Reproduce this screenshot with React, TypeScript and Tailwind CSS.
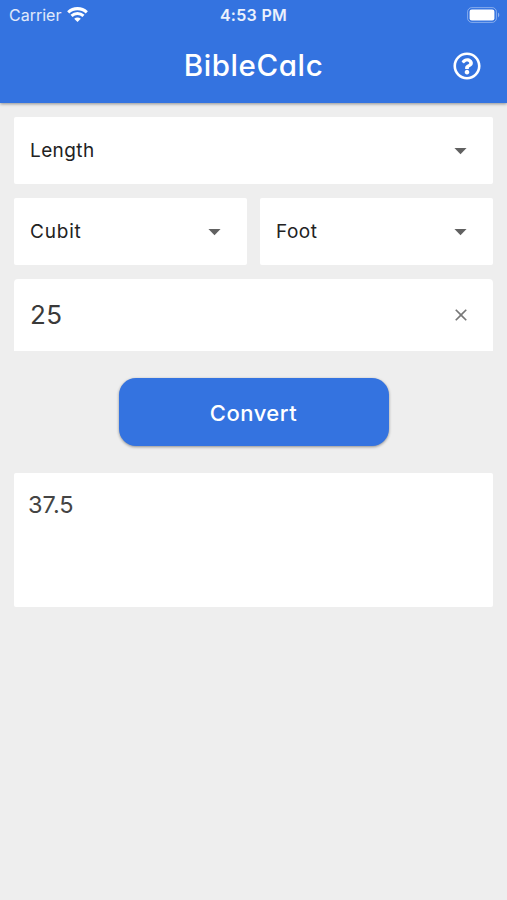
import React, { type FC, useState } from 'react';
import { clsx } from 'clsx';
import { FaRegQuestionCircle } from 'react-icons/fa';
import { MdArrowDropDown, MdClose } from 'react-icons/md';

const WifiIcon: FC = () => (
  <svg width="21" height="16" viewBox="0 0 21 16" fill="none">
    <path d="M1.2 5.4C6.5.4 14.5.4 19.8 5.4" stroke="white" strokeWidth="3.1" />
    <path d="M4.5 8.9C8 5.6 13 5.6 16.5 8.9" stroke="white" strokeWidth="3" />
    <path
      d="M10.5 15 7.2 11.8C9.1 10 11.9 10 13.8 11.8Z"
      fill="white"
    />
  </svg>
);

const BatteryIcon: FC = () => (
  <svg width="34" height="16" viewBox="0 0 34 16" fill="none">
    <rect
      x=".6"
      y=".6"
      width="28.8"
      height="14.8"
      rx="4.2"
      stroke="white"
      strokeOpacity=".4"
    />
    <rect x="2.6" y="2.6" width="24.8" height="10.8" rx="2.2" fill="white" />
    <path d="M31 5.6C32.8 6.4 32.8 9.6 31 10.4Z" fill="white" fillOpacity=".45" />
  </svg>
);

interface SelectBoxProps {
  label: string;
  textClassName: string;
}

const SelectBox: FC<SelectBoxProps> = ({ label, textClassName }) => (
  <button className="flex h-[67px] items-center justify-between rounded-[2px] bg-white pl-4 pr-[18px] text-[#222222]">
    <span className={clsx('pt-0.5 text-[19px]', textClassName)}>{label}</span>
    <MdArrowDropDown size={29} className="text-[#616161]" />
  </button>
);

export default function App() {
  const [value, setValue] = useState('25');
  const [result, setResult] = useState('37.5');

  const convert = () => setResult(value ? String(Number(value) * 1.5) : '');

  return (
    <div className="flex h-[900px] w-[507px] flex-col bg-[#eeeeee] font-['Inter',sans-serif] [font-feature-settings:'cv11']">
      <header className="h-[103px] bg-[#3473e0] text-white shadow-[0_1px_3px_rgba(0,0,0,0.4)]">
        <div className="grid h-[30px] grid-cols-3 items-center pl-[9px] pr-1.5">
          <div className="flex items-center gap-1.5 text-[16px] text-white/85 [font-feature-settings:normal]">
            Carrier
            <WifiIcon />
          </div>
          <div className="-ml-[3px] text-center text-[16px] font-semibold tracking-[0.3px] text-white/90">
            4:53 PM
          </div>
          <div className="flex justify-end">
            <BatteryIcon />
          </div>
        </div>
        <div className="grid h-[72px] grid-cols-[1fr_auto_1fr] items-center pr-[26px]">
          <h1 className="col-start-2 -mt-0.5 ml-[26px] text-[29.5px] font-medium tracking-[0.6px]">
            BibleCalc
          </h1>
          <button className="justify-self-end">
            <FaRegQuestionCircle size={28} />
          </button>
        </div>
      </header>

      <main className="flex flex-col px-3.5 pt-3.5">
        <SelectBox label="Length" textClassName="tracking-[0.4px]" />
        <div className="mt-3.5 grid grid-cols-2 gap-[13px]">
          <SelectBox label="Cubit" textClassName="tracking-[0.8px]" />
          <SelectBox label="Foot" textClassName="tracking-[0.5px]" />
        </div>
        <div className="mt-3.5 flex h-[72px] items-center justify-between rounded-t-[4px] bg-white pl-4 pr-[22px]">
          <input
            className="w-80 bg-transparent pb-0.5 text-[26px] tracking-[0.3px] text-[#3a3a3a] outline-none"
            value={value}
            onChange={(e) => setValue(e.target.value)}
          />
          <button onClick={() => setValue('')}>
            <MdClose size={20} className="text-[#777777]" />
          </button>
        </div>
        <button
          className="mt-[27px] h-[68px] w-[270px] self-center rounded-[17px] bg-[#3473e0] pt-0.5 text-[22px] tracking-[0.5px] font-[450] text-white shadow-[0_1px_3px_rgba(0,0,0,0.4)]"
          onClick={convert}
        >
          Convert
        </button>
        <div className="mt-[27px] h-[134px] rounded-[2px] bg-white px-3.5 pt-3.5 text-[23.5px] text-[#444444]">
          {result}
        </div>
      </main>
    </div>
  );
}
